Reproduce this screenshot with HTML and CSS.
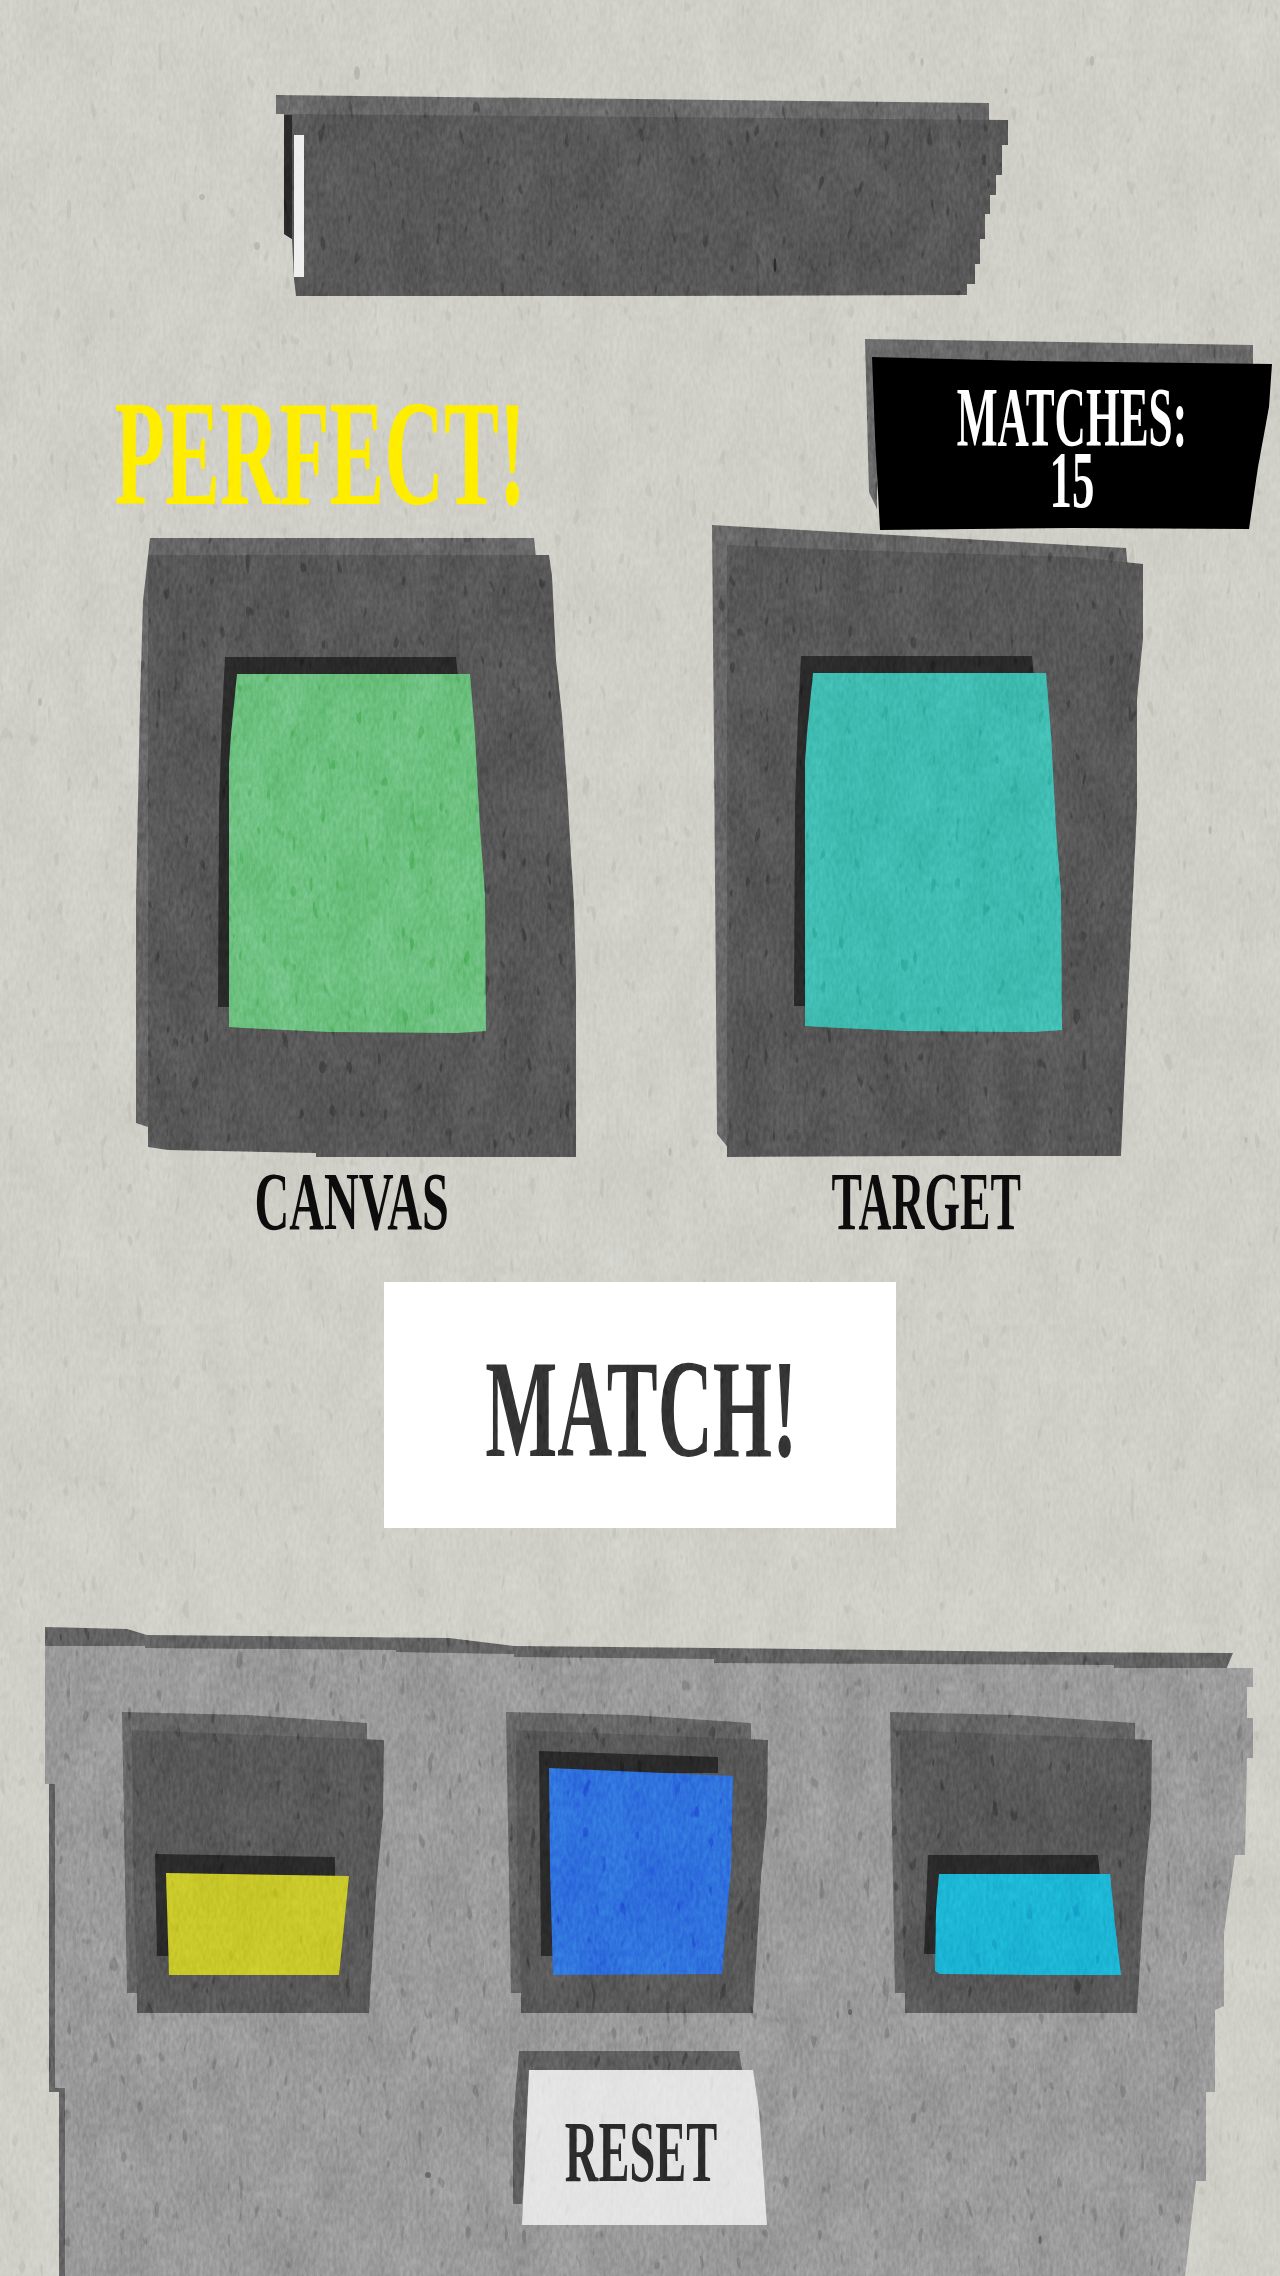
FILE: index.html
```html
<!DOCTYPE html>
<html lang="en">
<head>
<meta charset="utf-8">
<title>Paper colour match</title>
<link rel="stylesheet" href="styles.css">
</head>
<body>
<main class="game">
  <section class="sheet progress">
    <div class="face progress-face"><div class="progress-fill"></div></div>
  </section>

  <div class="status-row">
    <div class="perfect"><span class="cap cap-perfect">PERFECT!</span></div>
    <div class="sheet matches">
      <div class="face matches-face">
        <span class="cap cap-matches">MATCHES:</span>
        <span class="cap cap-count">15</span>
      </div>
    </div>
  </div>

  <div class="compare-row">
    <div class="compare compare-canvas">
      <div class="sheet frame frame-canvas">
        <div class="face frame-canvas-face">
          <div class="sheet big-swatch swatch-canvas"><div class="face big-swatch-face green"></div></div>
        </div>
      </div>
      <div class="label"><span class="cap cap-canvas">CANVAS</span></div>
    </div>
    <div class="compare compare-target">
      <div class="sheet frame frame-target">
        <div class="face frame-target-face">
          <div class="sheet big-swatch swatch-target"><div class="face big-swatch-face teal"></div></div>
        </div>
      </div>
      <div class="label"><span class="cap cap-target">TARGET</span></div>
    </div>
  </div>

  <button class="match-btn" type="button"><span class="cap cap-match">MATCH!</span></button>

  <section class="sheet palette">
    <div class="face palette-face">
      <div class="slots">
        <div class="sheet slot"><div class="face slot-face">
          <div class="sheet chip chip-yellow"><div class="face chip-yellow-face"></div></div>
        </div></div>
        <div class="sheet slot"><div class="face slot-face">
          <div class="sheet chip chip-blue"><div class="face chip-blue-face"></div></div>
        </div></div>
        <div class="sheet slot"><div class="face slot-face">
          <div class="sheet chip chip-cyan"><div class="face chip-cyan-face"></div></div>
        </div></div>
      </div>
      <div class="sheet reset">
        <div class="face reset-face"><span class="cap cap-reset">RESET</span></div>
      </div>
    </div>
  </section>
</main>

<svg class="grain" width="1280" height="2276" aria-hidden="true">
  <filter id="mottle" x="0" y="0" width="100%" height="100%" color-interpolation-filters="sRGB">
    <feTurbulence type="fractalNoise" baseFrequency="0.03 0.014" numOctaves="4" seed="11"/>
    <feColorMatrix values="1.2 0 0 0 -0.1  1.2 0 0 0 -0.1  1.2 0 0 0 -0.1  0 0 0 0 1"/>
  </filter>
  <filter id="fine" x="0" y="0" width="100%" height="100%" color-interpolation-filters="sRGB">
    <feTurbulence type="fractalNoise" baseFrequency="0.3 0.12" numOctaves="3" seed="4"/>
    <feColorMatrix values="1.8 0 0 0 -0.4  1.8 0 0 0 -0.4  1.8 0 0 0 -0.4  0 0 0 0 1"/>
  </filter>
  <filter id="flecks" x="0" y="0" width="100%" height="100%" color-interpolation-filters="sRGB">
    <feTurbulence type="fractalNoise" baseFrequency="0.11 0.04" numOctaves="2" seed="23"/>
    <feColorMatrix values="0 0 0 0 0  0 0 0 0 0  0 0 0 0 0  16 0 0 0 -11.6"/>
  </filter>
  <rect width="1280" height="2276" filter="url(#mottle)" opacity="0.1"/>
  <rect width="1280" height="2276" filter="url(#fine)" opacity="0.1"/>
  <rect width="1280" height="2276" filter="url(#flecks)" opacity="0.22"/>
  <g fill="#000" opacity="0.5">
    <ellipse cx="357" cy="73" rx="3" ry="7"/>
    <ellipse cx="202" cy="197" rx="3" ry="3"/>
    <ellipse cx="257" cy="246" rx="3" ry="4"/>
    <ellipse cx="922" cy="62" rx="1.5" ry="4"/>
    <ellipse cx="1092" cy="61" rx="2" ry="5"/>
    <ellipse cx="1006" cy="91" rx="1.5" ry="3"/>
    <ellipse cx="40" cy="702" rx="2" ry="4"/>
    <ellipse cx="590" cy="620" rx="1.5" ry="4"/>
    <ellipse cx="1210" cy="830" rx="1.5" ry="4"/>
    <ellipse cx="428" cy="2175" rx="3" ry="3"/>
    <ellipse cx="850" cy="2012" rx="2" ry="3"/>
    <ellipse cx="1040" cy="2240" rx="1.5" ry="4"/>
    <ellipse cx="1246" cy="1140" rx="1.5" ry="3"/>
    <ellipse cx="670" cy="1152" rx="1.5" ry="4"/>
    <ellipse cx="775" cy="265" rx="1.5" ry="7"/>
  </g>
</svg>
</body>
</html>
```

FILE: styles.css
```css
* { box-sizing: border-box; }

html, body { margin: 0; padding: 0; }

body {
  width: 1280px;
  height: 2276px;
  overflow: hidden;
  background: #d0d0c9;
  font-family: "Liberation Serif", serif;
  font-weight: 700;
  position: relative;
}

.game { width: 1280px; height: 2276px; overflow: hidden; }

.grain {
  position: absolute;
  left: 0;
  top: 0;
  mix-blend-mode: overlay;
  pointer-events: none;
}

/* paper sheets: a face, with a cast shadow peeking out behind it */
.sheet { position: relative; }
.sheet::before { content: ""; position: absolute; background: #6a6a6a; }
.face { position: relative; height: 100%; }

/* condensed display caps */
.cap { display: inline-block; white-space: nowrap; line-height: 1; }
.cap-perfect { font-size: 151px; color: #ffee00; transform: scaleX(.545); }
.cap-matches { font-size: 85px; line-height: 66px; height: 66px; color: #fff; transform: scaleX(.51); }
.cap-count { font-size: 80px; line-height: 60px; height: 60px; color: #fff; transform: scaleX(.56); }
.cap-canvas { font-size: 83px; color: #0c0c0c; transform: scaleX(.58); }
.cap-target { font-size: 83px; color: #0c0c0c; transform: scaleX(.55); }
.cap-match { font-size: 140px; color: #333; transform: scaleX(.545); }
.cap-reset { font-size: 86px; color: #2b2b2b; transform: scaleX(.54); }

/* progress */
.progress { width: 724px; height: 182px; margin: 114px 0 0 284px; }
.progress::before {
  left: -8px; top: -19px; width: 713px; height: 45px;
  clip-path: polygon(0 0, 713px 8px, 713px 25px, 724px 40px, 8px 40px, 8px 19px, 0 19px);
}
.progress-face {
  padding: 21px 0 0 10px;
  background: #595959;
  clip-path: polygon(0 0, 724px 6px, 724px 31px, 718px 31px, 718px 61px, 712px 61px, 712px 81px, 706px 81px, 706px 100px, 701px 100px, 701px 125px, 696px 125px, 696px 150px, 691px 150px, 691px 170px, 683px 170px, 683px 181px, 360px 182px, 12px 182px, 10px 165px, 8px 125px, 0 120px);
}
.progress-fill { position: relative; width: 10px; height: 142px; background: #eee; }
.progress-fill::before {
  content: ""; position: absolute;
  left: -12px; top: -20px; width: 10px; height: 124px;
  background: #2b2b2b;
}

/* status */
.status-row {
  display: flex;
  align-items: flex-start;
  margin-top: 61px;
}
.perfect {
  width: 404px;
  height: 100px;
  margin: 46px 350px 0 118px;
  display: flex;
  justify-content: center;
  align-items: center;
}
.matches { width: 400px; height: 173px; }
.matches::before {
  left: -7px; top: -18px; width: 388px; height: 173px;
  clip-path: polygon(0 0, 388px 6px, 388px 30px, 12px 30px, 12px 170px, 4px 153px);
}
.matches-face {
  display: flex;
  flex-direction: column;
  align-items: center;
  padding-top: 27px;
  background: #000;
  clip-path: polygon(0 0, 160px 4px, 400px 7px, 397px 50px, 386px 110px, 377px 172px, 200px 171px, 8px 173px, 3px 80px);
}

/* canvas / target */
.compare-row {
  display: flex;
  align-items: flex-end;
  margin: 15px 0 0 148px;
}
.compare-canvas { width: 428px; margin-right: 151px; }
.compare-target { width: 416px; }

.frame-canvas { width: 428px; height: 602px; }
.frame-canvas::before {
  background: #676767;
  left: -12px; top: -17px; width: 400px; height: 610px;
  clip-path: polygon(14px 0, 398px 0, 400px 20px, 24px 20px, 24px 593px, 0 585px, 0 363px, 4px 163px, 7px 63px);
}
.frame-canvas-face {
  padding: 119px 0 0 81px;
  background: #585858;
  clip-path: polygon(0 0, 401px 0, 404px 21px, 408px 105px, 414px 160px, 419px 230px, 422px 284px, 426px 349px, 428px 424px, 428px 602px, 168px 602px, 168px 598px, 20px 595px, 0 592px);
}
.frame-target { width: 416px; height: 612px; }
.frame-target::before {
  background: #676767;
  left: -15px; top: -20px; width: 416px; height: 630px;
  clip-path: polygon(0 0, 414px 23px, 416px 45px, 18px 40px, 18px 625px, 5px 609px, 2px 224px);
}
.frame-target-face {
  padding: 128px 0 0 78px;
  background: #585858;
  clip-path: polygon(0 0, 120px 5px, 350px 12px, 416px 19px, 416px 94px, 410px 154px, 410px 263px, 405px 368px, 401px 452px, 394px 611px, 200px 611px, 0 612px);
}

.big-swatch { width: 257px; height: 359px; }
.big-swatch::before {
  background: #2a2a2a;
  left: -11px; top: -17px; width: 250px; height: 350px;
  clip-path: polygon(7px 0, 238px 0, 240px 20px, 20px 20px, 20px 350px, 0 350px, 1px 150px, 4px 60px);
}
.big-swatch-face {
  clip-path: polygon(8px 0, 241px 0, 246px 61px, 251px 155px, 256px 220px, 257px 357px, 228px 359px, 100px 358px, 15px 354px, 0 353px, 0 90px, 2px 60px, 5px 30px);
}
.green { background: #6dc180; }
.teal { background: #3fbcb1; }

.label {
  width: 408px;
  height: 55px;
  margin-top: 17px;
  margin-bottom: 3px;
  display: flex;
  justify-content: center;
  align-items: center;
}
.compare-target .label { width: 398px; }

/* match button */
.match-btn {
  display: flex;
  justify-content: center;
  align-items: center;
  width: 512px;
  height: 246px;
  margin: 50px 0 0 384px;
  padding: 8px 0 0 2px;
  border: 0;
  background: #fff;
  font: inherit;
}

/* palette */
.palette { width: 1208px; height: 631px; margin: 118px 0 0 45px; }
.palette::before {
  background: #646464;
  left: 0; top: -19px; width: 1188px; height: 650px;
  clip-path: polygon(0 0, 82px 2px, 102px 8px, 404px 11px, 469px 19px, 669px 21px, 1004px 25px, 1188px 26px, 1180px 45px, 10px 45px, 10px 461px, 20px 461px, 20px 650px, 14px 650px, 14px 465px, 4px 465px, 4px 157px, 0 157px);
}
.palette-face {
  padding: 84px 0 0 87px;
  background: #9b9b9b;
  clip-path: polygon(0 0, 100px 0, 100px 2px, 351px 4px, 351px 6px, 469px 8px, 469px 11px, 669px 13px, 669px 17px, 1069px 19px, 1069px 22px, 1208px 22px, 1208px 41px, 1202px 41px, 1202px 72px, 1208px 72px, 1208px 112px, 1202px 112px, 1200px 209px, 1190px 209px, 1179px 287px, 1179px 360px, 1170px 364px, 1170px 446px, 1161px 446px, 1161px 535px, 1151px 535px, 1140px 631px, 20px 631px, 20px 442px, 10px 442px, 10px 138px, 0 138px);
}
.slots { display: flex; gap: 132px; }
.slot { width: 252px; height: 283px; }
.slot::before {
  background: #666;
  left: -10px; top: -18px; width: 245px; height: 281px;
  clip-path: polygon(0 0, 125px 3px, 245px 11px, 245px 30px, 15px 30px, 15px 281px, 5px 281px);
}
.slot-face {
  display: flow-root;
  background: #595959;
  clip-path: polygon(0 0, 252px 10px, 251px 86px, 245px 147px, 237px 283px, 5px 283px, 5px 263px, 1px 120px);
}
.slot .sheet::before { background: #2a2a2a; }

.chip-yellow { width: 183px; height: 102px; margin: 143px 0 0 34px; }
.chip-yellow::before {
  left: -11px; top: -19px; width: 180px; height: 102px;
  clip-path: polygon(0 0, 180px 3px, 180px 22px, 15px 22px, 15px 102px, 2px 102px);
}
.chip-yellow-face {
  background: #c9c92a;
  clip-path: polygon(0 0, 183px 3px, 173px 102px, 3px 102px);
}
.chip-blue { width: 184px; height: 207px; margin: 38px 0 0 33px; }
.chip-blue::before {
  left: -10px; top: -17px; width: 179px; height: 205px;
  clip-path: polygon(0 0, 179px 6px, 179px 22px, 11px 22px, 16px 205px, 2px 205px);
}
.chip-blue-face {
  background: #2f72de;
  clip-path: polygon(0 0, 184px 8px, 182px 100px, 173px 206px, 4px 207px, 1px 100px);
}
.chip-cyan { width: 186px; height: 101px; margin: 144px 0 0 35px; }
.chip-cyan::before {
  left: -11px; top: -19px; width: 176px; height: 99px;
  clip-path: polygon(4px 0, 174px 0, 176px 21px, 21px 21px, 14px 99px, 0 99px);
}
.chip-cyan-face {
  background: #1cb6d5;
  clip-path: polygon(4px 0, 175px 0, 180px 50px, 186px 101px, 100px 101px, 5px 100px, 0 97px, 1px 35px);
}

.reset { width: 245px; height: 156px; margin: 57px 0 0 390px; }
.reset::before {
  background: #606060;
  left: -9px; top: -19px; width: 229px; height: 153px;
  clip-path: polygon(6px 0, 226px 0, 229px 19px, 20px 19px, 9px 153px, 0 153px, 0 70px);
}
.reset-face {
  display: flex;
  justify-content: center;
  align-items: center;
  padding: 8px 6px 0 0;
  background: #e4e4e4;
  clip-path: polygon(7px 0, 231px 0, 237px 40px, 245px 155px, 0 155px);
}
```
